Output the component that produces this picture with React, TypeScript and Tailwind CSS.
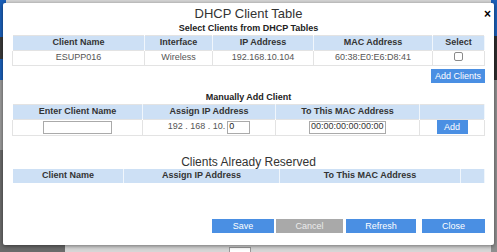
import React from 'react'

const font = { fontFamily: '"Liberation Sans", Arial, sans-serif' }

function Th({ children, className = '' }: { children?: React.ReactNode; className?: string }) {
  return (
    <th className={`border-x border-white/70 bg-[#cde0f5] p-0 text-center text-[9px] font-bold text-[#333] ${className}`}>
      {children}
    </th>
  )
}

function Td({ children, className = '' }: { children?: React.ReactNode; className?: string }) {
  return <td className={`border border-[#e3e3e3] p-0 text-center text-[9px] text-[#555] ${className}`}>{children}</td>
}

function Btn({ label, gray = false, className = '' }: { label: string; gray?: boolean; className?: string }) {
  return (
    <button
      className={`h-[14px] text-[9px] leading-[14px] ${gray ? 'bg-[#a9a9a9] text-[#ececec]' : 'bg-[#4a8fe3] text-white'} ${className}`}
    >
      {label}
    </button>
  )
}

export default function App() {
  return (
    <div className="relative h-[252px] w-[497px] overflow-hidden bg-[#d6d6d6]" style={font}>
      {/* page behind the overlay */}
      <div className="absolute left-0 top-0 h-[80px] w-[6px] bg-[#1b5fb8]" />
      <div className="absolute left-0 top-[37px] h-[22px] w-[6px] bg-[#3a3a3a]" />
      <div className="absolute left-0 top-[80px] h-[70px] w-[6px] bg-[#9b9b9b]" />
      <div className="absolute left-0 top-[150px] h-[102px] w-[65px] bg-[#6b6b6b]" />
      <div className="absolute right-0 top-0 h-[36px] w-[6px] bg-[#1b5fb8]" />
      <div className="absolute right-0 top-[36px] h-[44px] w-[6px] bg-[#2e2e2e]" />
      <div className="absolute right-0 top-[80px] h-[172px] w-[6px] bg-[#8f8f8f]" />
      <div className="absolute left-[229px] top-[247px] h-[8px] w-[22px] border border-[#999] bg-white" />

      <div className="relative ml-[3px] mt-[3px] flex h-[242px] w-[491px] flex-col rounded-[2px] bg-white px-[9px] shadow-[0_1px_4px_rgba(0,0,0,0.5)]">
        <span className="absolute right-[3px] top-[2px] text-[12px] font-bold text-black">×</span>

        <div className="mt-[2px] h-[17px] text-center text-[13px] leading-[17px] text-[#333]">DHCP Client Table</div>
        <div className="h-[13px] text-center text-[9px] font-bold leading-[13px] text-[#222]">Select Clients from DHCP Tables</div>

        <table className="w-full border-collapse border-t border-[#e3e3e3]">
          <thead>
            <tr className="h-[14px]">
              <Th className="w-[132px]">Client Name</Th>
              <Th className="w-[68px]">Interface</Th>
              <Th className="w-[101px]">IP Address</Th>
              <Th className="w-[119px]">MAC Address</Th>
              <Th>Select</Th>
            </tr>
          </thead>
          <tbody>
            <tr className="h-[15px]">
              <Td>ESUPP016</Td>
              <Td>Wireless</Td>
              <Td>192.168.10.104</Td>
              <Td>60:38:E0:E6:D8:41</Td>
              <Td>
                <span className="inline-block h-[9px] w-[9px] translate-y-[1px] rounded-[2px] border border-[#8a8a8a] bg-white" />
              </Td>
            </tr>
          </tbody>
        </table>

        <div className="mt-[3px] flex justify-end">
          <Btn label="Add Clients" className="w-[54px]" />
        </div>

        <div className="mt-[8px] h-[13px] text-center text-[9px] font-bold leading-[13px] text-[#222]">Manually Add Client</div>
        <table className="w-full border-collapse border-t border-[#e3e3e3]">
          <thead>
            <tr className="h-[15px]">
              <Th className="w-[130px]">Enter Client Name</Th>
              <Th className="w-[133px]">Assign IP Address</Th>
              <Th className="w-[144px]">To This MAC Address</Th>
              <Th />
            </tr>
          </thead>
          <tbody>
            <tr className="h-[16px]">
              <Td>
                <input className="mx-auto block h-[13px] w-[69px] border border-[#aaa] bg-white px-[2px] text-[9px] outline-none" />
              </Td>
              <Td>
                <span className="inline-flex items-center">
                  192 . 168 . 10.
                  <input
                    defaultValue="0"
                    className="ml-[2px] h-[13px] w-[23px] border border-[#aaa] bg-white px-[1px] text-[9px] text-[#222] outline-none"
                  />
                </span>
              </Td>
              <Td>
                <input
                  defaultValue="00:00:00:00:00:00"
                  className="mx-auto block h-[13px] w-[77px] border border-[#aaa] bg-white px-[1px] text-[9px] text-[#333] outline-none"
                />
              </Td>
              <Td>
                <Btn label="Add" className="mx-auto block w-[31px]" />
              </Td>
            </tr>
          </tbody>
        </table>

        <div className="mt-[19px] h-[14px] text-center text-[12px] leading-[14px] text-[#333]">Clients Already Reserved</div>
        <table className="w-full border-collapse">
          <thead>
            <tr className="h-[14px]">
              <Th className="w-[111px]">Client Name</Th>
              <Th className="w-[156px]">Assign IP Address</Th>
              <Th className="w-[181px]">To This MAC Address</Th>
              <Th />
            </tr>
          </thead>
        </table>

        <div className="mb-[12px] mt-auto flex justify-end gap-[2px]">
          <Btn label="Save" className="w-[62px]" />
          <Btn label="Cancel" gray className="w-[67px]" />
          <Btn label="Refresh" className="ml-[1px] w-[70px]" />
          <Btn label="Close" className="ml-[4px] w-[63px]" />
        </div>
      </div>
    </div>
  )
}
